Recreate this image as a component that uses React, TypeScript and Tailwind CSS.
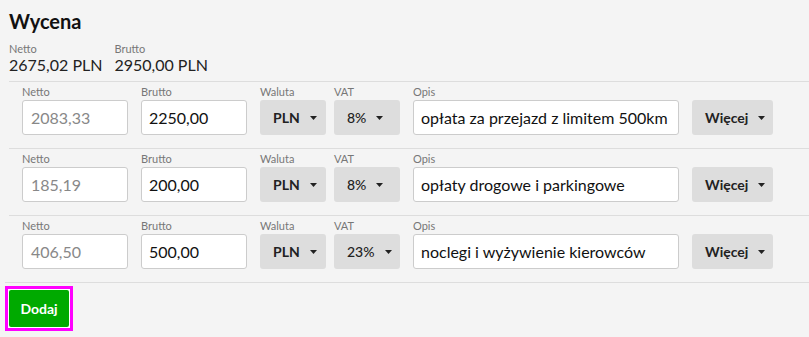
const rows = [
  { netto: '2083,33', brutto: '2250,00', vat: '8%', opis: 'opłata za przejazd z limitem 500km' },
  { netto: '185,19', brutto: '200,00', vat: '8%', opis: 'opłaty drogowe i parkingowe' },
  { netto: '406,50', brutto: '500,00', vat: '23%', opis: 'noclegi i wyżywienie kierowców' },
]

function Caret() {
  return (
    <svg width="7" height="4" viewBox="0 0 7 4" className="ml-[10px]">
      <path d="M0 0h7L3.5 4z" fill="#222" />
    </svg>
  )
}

function Field({ label, children }: { label: string; children: React.ReactNode }) {
  return (
    <div className="flex flex-col">
      <span className="text-[11px] leading-[14px] text-[#777] mb-[1px] h-[14px]">{label}</span>
      {children}
    </div>
  )
}

function Select({ value, w, weight = 'font-bold' }: { value: string; w: string; weight?: string }) {
  return (
    <div className={`${w} ${weight} h-[35px] rounded-[3px] bg-[#dddddd] flex items-center pl-[13px] text-[14px] text-[#222]`}>
      {value}
      <Caret />
    </div>
  )
}

export default function App() {
  return (
    <div className="min-h-[337px] bg-[#f4f4f4] text-[#222]" style={{ fontFamily: 'Lato, "Noto Sans", sans-serif' }}>
      <div className="px-[9px] pt-[9px]">
        <h1 className="text-[20px] leading-[24px] font-bold text-[#111]">Wycena</h1>
        <div className="flex gap-[12px] mt-[9px]">
          <div className="flex flex-col">
            <span className="text-[11px] leading-[14px] text-[#777]">Netto</span>
            <span className="text-[16px] leading-[17px]">2675,02 PLN</span>
          </div>
          <div className="flex flex-col">
            <span className="text-[11px] leading-[14px] text-[#777]">Brutto</span>
            <span className="text-[16px] leading-[17px]">2950,00 PLN</span>
          </div>
        </div>
      </div>

      <div className="ml-[9px] mt-[8px]">
        {rows.map((r, i) => (
          <div key={i} className="border-t border-[#dddddd] pl-[13px] pt-[3px] pb-[13px] flex gap-[13px]">
            <Field label="Netto">
              <div className="w-[106px] h-[35px] bg-white border border-[#cccccc] rounded-[3px] px-[8px] flex items-center text-[16px] text-[#888]">
                {r.netto}
              </div>
            </Field>
            <Field label="Brutto">
              <div className="w-[106px] h-[35px] bg-white border border-[#cccccc] rounded-[3px] px-[7px] flex items-center text-[16px] text-[#111]">
                {r.brutto}
              </div>
            </Field>
            <div className="flex gap-[8px]">
              <Field label="Waluta">
                <Select value="PLN" w="w-[66px]" />
              </Field>
              <Field label="VAT">
                <Select value={r.vat} w="w-[66px]" weight="font-medium" />
              </Field>
            </div>
            <Field label="Opis">
              <div className="w-[266px] h-[35px] bg-white border border-[#cccccc] rounded-[3px] px-[7px] flex items-center text-[16px] text-[#111] whitespace-nowrap overflow-hidden">
                {r.opis}
              </div>
            </Field>
            <Field label="">
              <Select value="Więcej" w="w-[81px]" />
            </Field>
          </div>
        ))}
        <div className="border-t border-[#dddddd] pt-[3px] -ml-[4px]">
          <div className="inline-block border-[3px] border-[#ff00ff] bg-white p-px">
            <button className="w-[60px] h-[37px] rounded-[2px] bg-[#00aa00] text-white text-[14px] font-bold block">
              Dodaj
            </button>
          </div>
        </div>
      </div>
    </div>
  )
}
